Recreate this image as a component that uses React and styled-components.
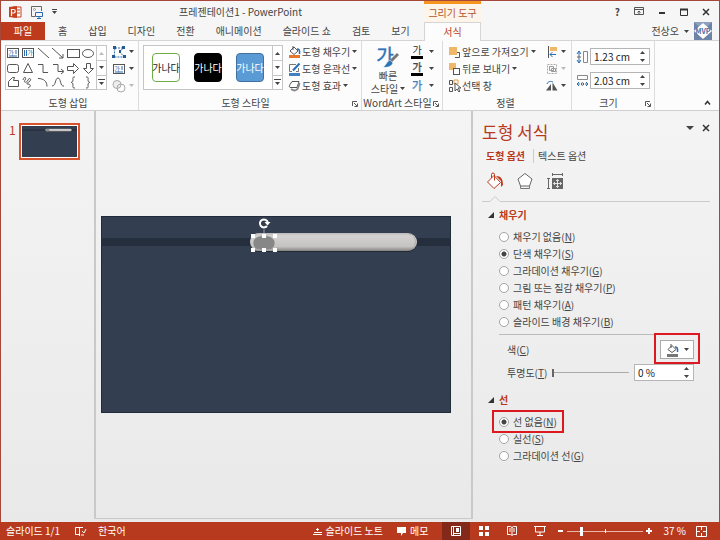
import { useState } from "react";
import styled, { createGlobalStyle } from "styled-components";

const GlobalStyle = createGlobalStyle`
  * {
    box-sizing: border-box;
  }

  body {
    margin: 0;
    font-family: "Noto Sans CJK KR", "Open Sans", sans-serif;
    font-size: 10px;
    line-height: 14px;
    color: #444;
  }

  button,
  input {
    font: inherit;
    color: inherit;
    margin: 0;
  }

  button {
    border: 0;
    padding: 0;
    background: none;
    white-space: nowrap;
  }

  svg {
    display: block;
    flex: none;
    overflow: visible;
  }
`;

const Icon = ({ w = 14, h = 14, children }) => (
  <svg width={w} height={h} viewBox={`0 0 ${w} ${h}`} fill="none" stroke="#555" aria-hidden="true">
    {children}
  </svg>
);

const Caret = ({ up, color = "#444" }) => (
  <svg width="5" height="3" viewBox="0 0 5 3" aria-hidden="true">
    <path d={up ? "M0 3h5L2.5 0z" : "M0 0h5L2.5 3z"} fill={color} />
  </svg>
);

const Hangul = ({ x, y, size, fill, children, stroke = "none" }) => (
  <text x={x} y={y} fontSize={size} fill={fill} stroke={stroke} strokeWidth="0.4" textAnchor="middle">
    {children}
  </text>
);

const shapes = [
  ["텍스트 상자", <><rect x="1.5" y="2.5" width="11" height="9" /><Hangul x="5" y="9" size="6" fill="#2b6cb0">가</Hangul><path d="M9 5h2M9 7h2M3 10h8" stroke="#2b6cb0" /></>],
  ["세로 텍스트 상자", <><rect x="1.5" y="2.5" width="11" height="9" /><Hangul x="9" y="9" size="6" fill="#2b6cb0">가</Hangul><path d="M3.500 4v6M5.500 4v6" stroke="#2b6cb0" /></>],
  ["선", <path d="M2 2l11 10" />],
  ["화살표", <path d="M1 2l11 10M12 8v4H8" />],
  ["직사각형", <rect x="1.5" y="3.5" width="12" height="8" />],
  ["타원", <ellipse cx="7" cy="7.5" rx="5.5" ry="4" />],
  ["둥근 직사각형", <rect x="1.5" y="3.500" width="11" height="8" rx="2" />],
  ["삼각형", <path d="M7 2.500L2.500 11.500h9z" />],
  ["꺾인 연결선", <path d="M2 3.500h5v8h5" />],
  ["꺾인 화살표", <path d="M2 3.500h5v7h5M10 8l3 2.500-3 2.500" />],
  ["오른쪽 화살표", <path d="M1.500 5.500h6V2.500l5 5-5 5V9.500h-6z" />],
  ["아래쪽 화살표", <path d="M5.500 2.500h4v5h3l-5 5-5-5h3z" />],
  ["자유형", <path d="M2.500 11.500V6.500l4-4h2l-1 3h5v6z" />],
  ["자유 곡선", <path d="M2 5c1-4 4-3 2 0s2 3 3 0 4-1 2 1-5 3-2 3 3 3 0 4" />],
  ["호", <path d="M2 3.500c6 0 9 3 9 8" />],
  ["곡선", <path d="M1 11c4 0 3-8 6-8s2 9 6 8" />],
  ["왼쪽 중괄호", <path d="M9 2c-3 0-2 1-2 3S6 7 5 7.500c1 0 2 .5 2 2.500s-1 3 2 3" />],
  ["오른쪽 중괄호", <path d="M5 2c3 0 2 1 2 3s1 2 2 2.500c-1 0-2 .5-2 2.500s1 3-2 3" />],
];

const tabs = ["홈", "삽입", "디자인", "전환", "애니메이션", "슬라이드 쇼", "검토", "보기"];

const wordStyles = [
  { name: "흰색 도형", bg: "#fff", line: "#70ad47", color: "#222" },
  { name: "검정 도형", bg: "#000", line: "#000", color: "#fff" },
  { name: "파랑 도형", bg: "#5b9bd5", line: "#41719c", color: "#fff" },
];

const fillOptions = [
  ["채우기 없음", "N"],
  ["단색 채우기", "S"],
  ["그라데이션 채우기", "G"],
  ["그림 또는 질감 채우기", "P"],
  ["패턴 채우기", "A"],
  ["슬라이드 배경 채우기", "B"],
];

const lineOptions = [
  ["선 없음", "N"],
  ["실선", "S"],
  ["그라데이션 선", "G"],
];

const GalleryScroll = ({ dimUp }) => (
  <ScrollColumn>
    <button type="button" aria-label="위로"><Caret up color={dimUp ? "#bbb" : "#444"} /></button>
    <button type="button" aria-label="아래로"><Caret /></button>
    <button type="button" aria-label="자세히">
      <svg width="7" height="6" viewBox="0 0 7 6"><path d="M0 0h7v1H0zM1 3h5L3.500 6z" fill="#444" /></svg>
    </button>
  </ScrollColumn>
);

const Launcher = () => (
  <LaunchButton type="button" aria-label="옵션 더 보기">
    <Icon w={6} h={6}><path d="M.5 5V.5H5M2 2l3 3M5.500 2.500v3h-3" /></Icon>
  </LaunchButton>
);

const Spinner = ({ label, value, onChange }) => (
  <SpinBox>
    <input aria-label={label} value={value} onChange={(e) => onChange(e.target.value)} />
    <div>
      <button type="button" aria-label={`${label} 늘리기`}><Caret up /></button>
      <button type="button" aria-label={`${label} 줄이기`}><Caret /></button>
    </div>
  </SpinBox>
);

const RadioList = ({ name, options, value, onChange, marked }) => (
  <Options>
    {options.map(([text, key]) => (
      <Option key={key} $marked={marked === key}>
        <input type="radio" name={name} checked={value === key} onChange={() => onChange(key)} />
        <span>{text}(<u>{key}</u>)</span>
      </Option>
    ))}
  </Options>
);

const SlideDrawing = ({ selected }) => (
  <SlideSvg viewBox="0 0 350 197">
    <defs>
      <linearGradient id="bar" x1="0" y1="0" x2="0" y2="1">
        <stop offset="0" stopColor="#b9b7b8" />
        <stop offset="0.150" stopColor="#d4d1d2" />
        <stop offset="0.75" stopColor="#c5c2c2" />
        <stop offset="1" stopColor="#858282" />
      </linearGradient>
    </defs>
    <rect width="350" height="197" fill="#333f50" />
    <rect x="0.5" y="0.5" width="349" height="196" fill="none" stroke="#222b3a" />
    <rect y="22" width="350" height="8" fill="#252e3c" />
    <rect x="149" y="18" width="167" height="18" rx="9" fill="#222a36" />
    <rect x="149" y="17" width="167" height="18" rx="9" fill="url(#bar)" />
    <path d="M308 18c8 1 9 14 0 16" fill="none" stroke="#9b9898" strokeWidth="1" opacity="0.6" />
    <ellipse cx="163" cy="27" rx="11" ry="7.500" fill="#878787" />
    {selected && (
      <g fill="#fff">
        <path d="M163 11v8M152 20h22v14h-22z" fill="none" stroke="#c9c9c9" strokeWidth="0.700" />
        {[152, 163, 174].map((x) => (
          <g key={x}>
            <rect x={x - 2} y="18" width="4" height="4" />
            <rect x={x - 2} y="32" width="4" height="4" />
          </g>
        ))}
        <path d="M166 10a4 4 0 1 1 .8-3.500" fill="none" stroke="#333f50" strokeWidth="4" />
        <path d="M166 10a4 4 0 1 1 .8-3.500" fill="none" stroke="#fff" strokeWidth="2" />
        <path d="M163.500 6h6l-3 3.500z" />
      </g>
    )}
  </SlideSvg>
);

const Ribbon = () => {
  const [height, setHeight] = useState("1.23 cm");
  const [width, setWidth] = useState("2.03 cm");

  return (
    <RibbonBar>
      <Group $basis="138px">
        <GroupBody $pad="4px">
          <Gallery>
            <ShapeGrid>
              {shapes.map(([name, art]) => (
                <button type="button" key={name} aria-label={name}><Icon>{art}</Icon></button>
              ))}
            </ShapeGrid>
            <GalleryScroll dimUp />
          </Gallery>
          <ToolStack>
            <Tool type="button" aria-label="도형 편집">
              <Icon><path d="M3 3h8L8 7l4 5H2z" stroke="#2b6cb0" strokeDasharray="2 1" /><path d="M1 1h3v3H1zM10 1h3v3h-3zM0 10h3v3H0zM11 10h3v3h-3zM7 5h2v3H7z" fill="#245a94" stroke="none" /></Icon>
              <Caret />
            </Tool>
            <Tool type="button" aria-label="텍스트 상자 그리기"><Icon>{shapes[0][1]}</Icon><Caret /></Tool>
            <Tool type="button" aria-label="도형 병합" disabled>
              <Icon><circle cx="5" cy="5.500" r="4" stroke="#aaa" fill="#eee" /><circle cx="9" cy="9" r="4" stroke="#aaa" /></Icon>
              <Caret color="#bbb" />
            </Tool>
          </ToolStack>
        </GroupBody>
        <GroupLabel><span>도형 삽입</span></GroupLabel>
      </Group>

      <Group $basis="223px">
        <GroupBody $pad="4px">
          <Gallery>
            <StyleRow>
              {wordStyles.map((s) => (
                <StyleChip type="button" key={s.name} aria-label={s.name} $bg={s.bg} $line={s.line} $color={s.color}>가나다</StyleChip>
              ))}
            </StyleRow>
            <GalleryScroll />
          </Gallery>
          <ToolStack>
            <Tool type="button" $gap="2px">
              <Icon w={12}><path d="M1 10h11v3H1z" fill="#e8762d" stroke="none" /><path d="M2 6l4-4 4 4-4 3.500zM5 1v4" /><path d="M9 4c2 0 3 1 2.500 5" stroke="#2b6cb0" strokeWidth="1.500" /></Icon>
              도형 채우기 <Caret />
            </Tool>
            <Tool type="button" $gap="2px">
              <Icon w={12}><path d="M1 11h11v3H1z" fill="#3f82c4" stroke="none" /><path d="M8 2.500H1.500v7H4M10.500 6v3.500H8" stroke="#777" /><path d="M11.500 1.500L5 8.500" stroke="#2b6cb0" strokeWidth="2" /></Icon>
              도형 윤곽선 <Caret />
            </Tool>
            <Tool type="button" $gap="2px">
              <Icon w={12}><path d="M4 2.500h7l-2 6H3c-2 0-2-1-1-3z" fill="#fff" /><path d="M3 10c3 2 6 2 7-1l1.500-5" strokeWidth="2" stroke="#888" /></Icon>
              도형 효과 <Caret />
            </Tool>
          </ToolStack>
        </GroupBody>
        <GroupLabel><span>도형 스타일</span><Launcher /></GroupLabel>
      </Group>

      <Group $basis="81px">
        <GroupBody $pad="8px">
          <QuickStyle type="button">
            <Icon w={24} h={24}>
              <Hangul x="9" y="18" size="19" fill="#2e75b6" stroke="#2e75b6">가</Hangul>
              <path d="M22 9l-8 8" stroke="#777" strokeWidth="3" />
              <path d="M14 15l3 3c-2 4-6 5-10 4 3-1 3-5 7-7z" fill="#2e75b6" stroke="#fff" strokeWidth="0.5" />
            </Icon>
            <span>빠른</span>
            <span>스타일 <Caret /></span>
          </QuickStyle>
          <ToolStack>
            <Tool type="button" $gap="6px" aria-label="텍스트 채우기"><Icon w={12}><Hangul x="6" y="9" size="10" fill="#333">가</Hangul><path d="M0 11h12v3H0z" fill="#000" stroke="none" /></Icon><Caret /></Tool>
            <Tool type="button" $gap="6px" aria-label="텍스트 윤곽선"><Icon w={12}><Hangul x="6" y="9" size="10" fill="#777" stroke="#333">가</Hangul><path d="M0 11h12v3H0z" fill="#000" stroke="none" /></Icon><Caret /></Tool>
            <Tool type="button" $gap="6px" aria-label="텍스트 효과"><Icon w={12}><Hangul x="6" y="11" size="11" fill="#7fb0e0" stroke="#2e75b6">가</Hangul></Icon><Caret /></Tool>
          </ToolStack>
        </GroupBody>
        <GroupLabel><span>WordArt 스타일</span><Launcher /></GroupLabel>
      </Group>

      <Group $basis="129px">
        <GroupBody $pad="5px" $spread>
          <ToolStack>
            <Tool type="button" $gap="2px"><Icon w={12}><path d="M7 7.500h4.500v5H7" /><path d="M1 2h8v8H1z" fill="#f0b768" stroke="none" /></Icon>앞으로 가져오기 <Caret /></Tool>
            <Tool type="button" $gap="2px"><Icon w={12}><path d="M1 1h7v7H1z" fill="#f0b768" stroke="none" /><rect x="5.500" y="6.500" width="6" height="6" fill="#fff" /></Icon>뒤로 보내기 <Caret /></Tool>
            <Tool type="button" $gap="2px"><Icon w={12}><path d="M1.500 1.500h3v4h-3zM1.500 8.500h3v4h-3z" /><path d="M6 1h4v4H6z" stroke="#e8a040" /><path d="M7 4v8l2-2 2 3 1-1-2-3h3z" fill="#fff" /></Icon>선택 창</Tool>
          </ToolStack>
          <ToolStack>
            <Tool type="button" aria-label="맞춤"><Icon w={12}><path d="M2.500 1v12" /><path d="M4 2h7v4H4z" fill="#f0b768" stroke="none" /><path d="M10 9.500H4M6.500 7L4 9.500 6.500 12" stroke="#2b6cb0" /></Icon><Caret /></Tool>
            <Tool type="button" aria-label="그룹" disabled><Icon w={12}><path d="M1.500 2.500h9v9h-9z" stroke="#aaa" strokeDasharray="2 1" /><path d="M3.500 4.500h4v4h-4zM5.500 6.500h4v3h-4z" stroke="#999" /></Icon><Caret color="#bbb" /></Tool>
            <Tool type="button" aria-label="회전"><Icon w={12}><path d="M6.500 11.500v-8l5 8zM0 11.500h5V5z" fill="#555" stroke="none" /><path d="M1 5c1-3 4-3 6-2" stroke="#2b6cb0" /></Icon><Caret /></Tool>
          </ToolStack>
        </GroupBody>
        <GroupLabel><span>정렬</span></GroupLabel>
      </Group>

      <Group $basis="83px">
        <SizeRows>
          <div>
            <Icon w={13}><path d="M3 1v4M3 9v4M1 4l2-3 2 3M1 10l2 3 2-3" stroke="#2b6cb0" /><circle cx="3" cy="7" r="1.200" /><path d="M7.500 1.500h4v11h-4z" stroke="#888" /></Icon>
            <Spinner label="도형 높이" value={height} onChange={setHeight} />
          </div>
          <div>
            <Icon w={13}><path d="M1.500 1.500h10v4h-10z" stroke="#888" /><path d="M1 10h3M9 10h3M3 8l-2 2 2 2M10 8l2 2-2 2" stroke="#2b6cb0" /><circle cx="6.500" cy="10" r="1.200" /></Icon>
            <Spinner label="도형 너비" value={width} onChange={setWidth} />
          </div>
        </SizeRows>
        <GroupLabel><span>크기</span><Launcher /></GroupLabel>
      </Group>

      <Collapse type="button" aria-label="리본 메뉴 축소">
        <Icon w={7} h={6}><path d="M1 4.500l2.500-3 2.500 3" stroke="#333" strokeWidth="1.500" /></Icon>
      </Collapse>
    </RibbonBar>
  );
};

const FormatPane = () => {
  const [fill, setFill] = useState("S");
  const [line, setLine] = useState("N");
  const [alpha, setAlpha] = useState("0 %");

  return (
    <Pane>
      <PaneHead>
        <h2>도형 서식</h2>
        <button type="button" aria-label="작업 창 옵션">
          <svg width="8" height="4" viewBox="0 0 8 4"><path d="M0 0h8L4 4z" fill="#444" /></svg>
        </button>
        <button type="button" aria-label="닫기">
          <Icon w={8} h={8}><path d="M1 1l6 6M7 1L1 7" stroke="#333" strokeWidth="1.500" /></Icon>
        </button>
      </PaneHead>
      <PaneTabs>
        <PaneTab type="button" $active>도형 옵션</PaneTab>
        <PaneTab type="button">텍스트 옵션</PaneTab>
      </PaneTabs>
      <PaneIcons>
        <button type="button" aria-label="채우기 및 선">
          <Icon w={18} h={18}>
            <path d="M8 3.500L1.500 10 8 16.500l6.500-6z" fill="#fff" stroke="#c0391b" />
            <path d="M5.500 6V2.500a1.500 1.500 0 0 1 3 0v6" stroke="#c0391b" />
            <path d="M10 4c5 0 7 3 7 9l-2 2V9z" fill="#c0391b" stroke="none" />
          </Icon>
        </button>
        <button type="button" aria-label="효과">
          <Icon w={18} h={18}><path d="M9 1.500l7 5.500-2.500 7h-9L2 7z" fill="#fff" stroke="#666" /><path d="M4.500 14v2.500h9V14" stroke="#777" /></Icon>
        </button>
        <button type="button" aria-label="크기 및 속성">
          <Icon w={18} h={18}><path d="M6 2.500h11M6.500 1v3M16.500 1v3M2.500 6v11M1 6.500h3M1 16.500h3" stroke="#666" /><path d="M6 6h11v11H6z" fill="#666" stroke="none" /><path d="M11.500 7.500v8M7.500 11.500h8M10 9l1.500-1.500L13 9M10 14l1.500 1.500L13 14M9 10l-1.500 1.500L9 13M14 10l1.500 1.500L14 13" stroke="#fff" strokeWidth="0.800" /></Icon>
        </button>
      </PaneIcons>
      <Notch>
        <svg width="28" height="7" viewBox="0 0 28 7"><path d="M0 6.500h8l5-5 5 5h10" fill="none" stroke="#ccc" /></svg>
        <i />
      </Notch>

      <SectionTitle>
        <Icon w={6} h={6}><path d="M6 0v6H0z" fill="#333" stroke="none" /></Icon>
        채우기
      </SectionTitle>
      <RadioList name="fill" options={fillOptions} value={fill} onChange={setFill} />
      <Rule />
      <Field>
        <label htmlFor="fill-color">색(<u>C</u>)</label>
        <Marked>
          <ColorButton id="fill-color" type="button">
            <Icon><path d="M2 11h11v3H2z" fill="#777" stroke="none" /><path d="M3 6.500l4-4 4 4-4 3zM6 1v4" /><path d="M10 4c2 0 3 1 2.500 5" stroke="#2b6cb0" strokeWidth="1.500" /></Icon>
            <Caret />
          </ColorButton>
        </Marked>
      </Field>
      <Field>
        <label htmlFor="alpha">투명도(<u>T</u>)</label>
        <Range id="alpha" type="range" min="0" max="100" defaultValue="0" />
        <Spinner label="투명도" value={alpha} onChange={setAlpha} />
      </Field>

      <SectionTitle $gap>
        <Icon w={6} h={6}><path d="M6 0v6H0z" fill="#333" stroke="none" /></Icon>
        선
      </SectionTitle>
      <RadioList name="line" options={lineOptions} value={line} onChange={setLine} marked="N" />
    </Pane>
  );
};

const StatusBar = () => (
  <Status>
    <StatusText>슬라이드 1/1</StatusText>
    <button type="button" aria-label="맞춤법 검사">
      <Icon w={12} h={12}><path d="M5.500 2.500h-4v7h4M5.500 2v9M5.500 2.500H9M7 10h3M8 6l2 2 2-4" stroke="#fff" /></Icon>
    </button>
    <button type="button">한국어</button>
    <Spacer />
    <NoteButton type="button"><Icon w={9} h={9}><path d="M1 5.500h8M0 7.500h9M3 2.500h3M4.500 1v3" stroke="#fff" /></Icon>슬라이드 노트</NoteButton>
    <NoteButton type="button"><Icon w={9} h={9}><path d="M0 0h9v6H6L4 9V6H0z" fill="#fff" stroke="none" /></Icon>메모</NoteButton>
    <Views>
      <ViewButton type="button" aria-label="기본" $on><Icon w={12} h={12}><path d="M1.500 1.500h9v9h-9zM3.500 1v10M4 8.500h7" stroke="#fff" /><path d="M6 3h3v4H6z" fill="#fff" stroke="none" /></Icon></ViewButton>
      <ViewButton type="button" aria-label="여러 슬라이드"><Icon w={12} h={12}><path d="M1 1h4v4H1zM7 1h4v4H7zM1 7h4v4H1zM7 7h4v4H7z" fill="#fff" stroke="none" /></Icon></ViewButton>
      <ViewButton type="button" aria-label="읽기용 보기"><Icon w={12} h={12}><path d="M1.500 1.500h3l1.500 1 1.500-1h3v8h-3L6 10.500l-1.500-1h-3zM6 2v8M3 4h2M3 6h2M7 4h2M7 6h2" stroke="#fff" /></Icon></ViewButton>
      <ViewButton type="button" aria-label="슬라이드 쇼"><Icon w={12} h={12}><path d="M0 1.500h12M1.500 2v5h9V2M6 7v3M3 10.500h6" stroke="#fff" /></Icon></ViewButton>
    </Views>
    <button type="button" aria-label="축소"><Icon w={6} h={6}><path d="M0 3h5" stroke="#fff" strokeWidth="2" /></Icon></button>
    <Zoom type="range" aria-label="확대/축소" min="0" max="100" defaultValue="17" />
    <button type="button" aria-label="확대"><Icon w={6} h={6}><path d="M0 3h6M3 0v6" stroke="#fff" strokeWidth="2" /></Icon></button>
    <Percent>37 %</Percent>
    <button type="button" aria-label="창에 맞춤"><Icon w={11} h={11}><path d="M.5.5h10v10H.5zM5.500 1v3M5.500 7v3M1 5.500h3M7 5.500h3" stroke="#fff" /></Icon></button>
  </Status>
);

const App = () => (
  <Window>
    <GlobalStyle />
    <Header>
      <TitleRow>
        <QuickAccess>
          <Icon w={14}>
            <path d="M5 2h8v10H5z" fill="#fff" stroke="#c8411f" />
            <path d="M8 5h4M8 8h4" stroke="#c8411f" />
            <path d="M1 2l8-1v12l-8-1z" fill="#c8411f" stroke="none" />
            <path d="M3.500 11V4.500h2a1.500 1.500 0 0 1 0 3.500h-2" stroke="#fff" strokeWidth="1.200" />
          </Icon>
          <button type="button" aria-label="처음부터 시작">
            <Icon w={14}><path d="M5 11.500H1.500v-10h10V6" stroke="#666" /><circle cx="4.500" cy="4.500" r="1" stroke="#999" /><path d="M5.500 7.500h7v4h-7zM9 12v2M7 13.500h4" stroke="#2b6cb0" /></Icon>
          </button>
          <button type="button" aria-label="빠른 실행 도구 모음 사용자 지정">
            <svg width="5" height="5" viewBox="0 0 5 5"><path d="M0 0h5v1H0zM0 2h5L2.500 5z" fill="#444" /></svg>
          </button>
        </QuickAccess>
        <Title>프레젠테이션1 - PowerPoint</Title>
      </TitleRow>
      <ContextTab>
        <span>그리기 도구</span>
        <button type="button">서식</button>
      </ContextTab>
      <WindowButtons>
        <button type="button" aria-label="도움말"><b>?</b></button>
        <button type="button" aria-label="리본 메뉴 표시 옵션"><Icon w={10} h={9}><path d="M.5.5h9v7h-9zM1 2.500h8M5 7V4M3.500 5.500L5 4l1.500 1.500" /></Icon></button>
        <button type="button" aria-label="최소화"><Icon w={8} h={8}><path d="M1 5h6" strokeWidth="2" stroke="#333" /></Icon></button>
        <button type="button" aria-label="최대화"><Icon w={8} h={8}><path d="M.5 1.500h7v6h-7z" stroke="#333" /><path d="M0 1.500h8" stroke="#333" strokeWidth="2" /></Icon></button>
        <button type="button" aria-label="닫기"><Icon w={8} h={8}><path d="M1 1l6 6M7 1L1 7" stroke="#333" strokeWidth="1.500" /></Icon></button>
      </WindowButtons>
      <TabRow>
        <FileTab type="button">파일</FileTab>
        {tabs.map((t) => (
          <Tab type="button" key={t}>{t}</Tab>
        ))}
      </TabRow>
      <Account>
        <button type="button">전상오 <Caret /></button>
        <Icon w={18} h={18}>
          <path d="M0 0h18v18H0z" fill="#6d83a8" stroke="none" />
          <path d="M0 0h18L9 9z" fill="#8ea0bd" stroke="none" />
          <path d="M9 1l9 8-9 8-9-8z" fill="#fff" stroke="none" />
          <text x="9" y="12" fontSize="7" fontWeight="700" textAnchor="middle" fill="#4a6ea5" stroke="none">MVP</text>
        </Icon>
      </Account>
    </Header>
    <Ribbon />
    <Workspace>
      <Thumbs>
        <span>1</span>
        <Thumb><SlideDrawing /></Thumb>
      </Thumbs>
      <Canvas><SlideDrawing selected /></Canvas>
      <FormatPane />
    </Workspace>
    <StatusBar />
  </Window>
);

const Window = styled.div`
  display: flex;
  flex-direction: column;
  min-height: 100vh;
  border: 1px solid #a5483a;
  border-bottom: 0;
  background: #f6f6f6;
`;

const Header = styled.header`
  display: grid;
  grid-template-columns: 423px 57px 1fr;
  grid-template-rows: 21px 18px;
  border-bottom: 1px solid #d5d5d5;
`;

const TitleRow = styled.div`
  display: flex;
  align-items: center;
`;

const QuickAccess = styled.div`
  display: flex;
  align-items: center;
  gap: 8px;
  width: 56px;
  padding-left: 7px;
`;

const Title = styled.div`
  flex: 1;
  text-align: center;
`;

const ContextTab = styled.div`
  grid-row: 1 / 3;
  grid-column: 2;
  display: flex;
  flex-direction: column;
  text-align: center;
  color: #b5562d;
  background: #fdf4ea;
  border-top: 3px solid #f7941e;
  margin-bottom: -1px;

  span {
    height: 18px;
    line-height: 18px;
    white-space: nowrap;
  }

  button {
    flex: 1;
    background: #fcfcfc;
    color: #b83a1b;
    border: 1px solid #d5d5d5;
    border-bottom: 0;
  }
`;

const WindowButtons = styled.div`
  display: flex;
  align-items: center;
  justify-content: flex-end;
  gap: 14px;
  padding-right: 9px;
`;

const TabRow = styled.nav`
  grid-row: 2;
  grid-column: 1;
  display: flex;
  gap: 1px;
`;

const Tab = styled.button`
  padding: 0 10px;
`;

const FileTab = styled.button`
  width: 44px;
  margin-right: 2px;
  color: #fff;
  background: #be3a1c;
`;

const Account = styled.div`
  display: flex;
  align-items: center;
  justify-content: flex-end;
  gap: 5px;
  padding-right: 7px;

  button {
    display: flex;
    align-items: center;
    gap: 5px;
  }
`;

const RibbonBar = styled.div`
  display: flex;
  height: 70px;
  background: #fcfcfc;
  border-bottom: 1px solid #cfcfcf;
`;

const Group = styled.section`
  display: flex;
  flex-direction: column;
  flex: 0 0 ${(props) => props.$basis};
  min-width: 0;
  padding-top: 2px;
  border-right: 1px solid #dcdcdc;
`;

const GroupBody = styled.div`
  display: flex;
  justify-content: ${(props) => (props.$spread ? "space-between" : "flex-start")};
  gap: 5px;
  height: 51px;
  padding: 0 ${(props) => props.$pad};
`;

const GroupLabel = styled.div`
  display: flex;
  align-items: center;
  height: 16px;
  padding: 2px 3px 0 0;
  white-space: nowrap;

  span {
    flex: 1;
    text-align: center;
  }
`;

const LaunchButton = styled.button`
  margin-top: 2px;
`;

const Gallery = styled.div`
  display: flex;
  height: 45px;
  margin-top: 2px;
  border: 1px solid #c6c6c6;
  background: #fff;
`;

const ShapeGrid = styled.div`
  display: grid;
  grid-template-columns: repeat(6, 15px);
  align-content: space-evenly;
`;

const StyleRow = styled.div`
  display: flex;
  align-items: center;
  gap: 14px;
  padding: 0 8px;
`;

const StyleChip = styled.button`
  display: flex;
  justify-content: center;
  align-items: center;
  width: 28px;
  height: 29px;
  border: 1px solid ${(props) => props.$line};
  border-radius: 4px;
  background: ${(props) => props.$bg};
  color: ${(props) => props.$color};
`;

const ScrollColumn = styled.div`
  display: grid;
  grid-template-rows: repeat(3, 1fr);
  width: 10px;
  border-left: 1px solid #c6c6c6;

  button {
    display: flex;
    align-items: center;
    justify-content: center;
  }

  button + button {
    border-top: 1px solid #c6c6c6;
  }
`;

const ToolStack = styled.div`
  display: grid;
  grid-template-rows: repeat(3, 17px);
`;

const Tool = styled.button`
  display: flex;
  align-items: center;
  gap: ${(props) => props.$gap || "3px"};
`;

const QuickStyle = styled.button`
  display: flex;
  flex-direction: column;
  align-items: center;
  width: 36px;
  padding-top: 2px;

  span {
    display: flex;
    align-items: center;
    gap: 2px;
    line-height: 13px;
  }
`;

const SizeRows = styled.div`
  display: flex;
  flex-direction: column;
  gap: 7px;
  height: 51px;
  padding: 5px 2px 0 4px;

  > div {
    display: flex;
    align-items: center;
    gap: 1px;
  }
`;

const SpinBox = styled.div`
  display: flex;
  width: 60px;
  height: 17px;
  border: 1px solid #b5b5b5;
  background: #fff;
  color: #222;

  input {
    flex: 1;
    min-width: 0;
    padding: 0 0 0 3px;
    border: 0;
    outline: none;
    background: none;
  }

  > div {
    display: grid;
    width: 13px;
  }

  button {
    display: flex;
    align-items: center;
    justify-content: center;
  }
`;

const Collapse = styled.button`
  align-self: flex-end;
  margin: 0 8px 4px auto;
`;

const Workspace = styled.main`
  display: grid;
  grid-template-columns: 93px 1fr 246px;
  flex: 1;
  background: linear-gradient(#f4f4f4, #e9e9e9);
`;

const Thumbs = styled.aside`
  display: flex;
  align-items: flex-start;
  gap: 3px;
  padding: 12px 0 0 8px;
  color: #c0391b;
  font-size: 12px;
`;

const Thumb = styled.div`
  width: 61px;
  border: 2px solid #d9532c;
  padding: 1px;
  background: #fff;
`;

const Canvas = styled.section`
  display: flex;
  align-items: center;
  margin-bottom: 3px;
  padding: 0 20px 0 5px;
  border: solid #c9c9c9;
  border-width: 0 2px 1px 2px;
`;

const SlideSvg = styled.svg`
  flex: auto;
  width: 100%;
  height: auto;
`;

const Pane = styled.aside`
  padding: 9px 9px 0 9px;
`;

const PaneHead = styled.div`
  display: flex;
  align-items: flex-start;
  gap: 8px;

  h2 {
    flex: 1;
    margin: 0;
    font-size: 17px;
    font-weight: 400;
    line-height: 24px;
    color: #b7391d;
  }

  button {
    display: flex;
    align-items: center;
    height: 16px;
  }
`;

const PaneTabs = styled.div`
  display: flex;
  padding: 5px 0 0 4px;
`;

const PaneTab = styled.button`
  padding-right: 8px;
  color: ${(props) => (props.$active ? "#b7391d" : "#444")};
  font-weight: ${(props) => (props.$active ? 700 : 400)};

  & + & {
    padding: 0 0 0 4px;
    border-left: 1px solid #ccc;
  }
`;

const PaneIcons = styled.div`
  display: flex;
  gap: 12px;
  padding: 9px 0 5px 4px;
`;

const Notch = styled.div`
  display: flex;
  align-items: flex-end;

  i {
    flex: 1;
    border-top: 1px solid #ccc;
  }
`;

const SectionTitle = styled.h3`
  display: flex;
  align-items: center;
  gap: 5px;
  margin: ${(props) => (props.$gap ? "12px" : "6px")} 0 6px 6px;
  font-size: 10px;
  font-weight: 700;
  color: #b7391d;
`;

const Options = styled.div`
  display: flex;
  flex-direction: column;
  align-items: flex-start;
  padding-left: 17px;
`;

const Option = styled.label`
  position: relative;
  display: flex;
  align-items: center;
  gap: 4px;
  height: 17px;

  input {
    appearance: none;
    width: 10px;
    height: 10px;
    border: 1px solid #a5a5a5;
    border-radius: 50%;
    background: #fff;
  }

  input:checked {
    background: radial-gradient(circle, #444 2px, #fff 3px);
  }

  &::after {
    content: ${(props) => (props.$marked ? '""' : "none")};
    position: absolute;
    inset: -3px -7px;
    border: 2px solid #dc1820;
  }
`;

const Rule = styled.div`
  margin: 4px 13px 5px 17px;
  border-top: 1px solid #bbb;
`;

const Field = styled.div`
  display: flex;
  align-items: center;
  justify-content: space-between;
  gap: 5px;
  padding: 0 16px 0 25px;
  margin-bottom: 5px;
`;

const Marked = styled.div`
  position: relative;

  &::after {
    content: "";
    position: absolute;
    inset: -7px -6px -5px -6px;
    border: 2px solid #dc1820;
    pointer-events: none;
  }
`;

const ColorButton = styled.button`
  display: flex;
  align-items: center;
  justify-content: center;
  gap: 5px;
  width: 34px;
  height: 19px;
  border: 1px solid #ababab;
  background: #fff;
`;

const Range = styled.input`
  appearance: none;
  flex: 1;
  min-width: 0;
  height: 9px;
  background: linear-gradient(#aaa, #aaa) center / 100% 1px no-repeat;

  &::-webkit-slider-thumb {
    appearance: none;
    width: 2px;
    height: 8px;
    background: #666;
  }
`;

const Status = styled.footer`
  display: flex;
  align-items: center;
  height: 18px;
  margin: 0 -1px;
  padding: 0 13px 0 6px;
  color: #fff;
  background: #b83a1e;
`;

const StatusText = styled.span`
  margin-right: 14px;

  & + button {
    margin-right: 12px;
  }
`;

const Spacer = styled.div`
  flex: 1;
`;

const NoteButton = styled.button`
  display: flex;
  align-items: center;
  gap: 4px;
  margin-right: 14px;
`;

const Views = styled.div`
  display: flex;
  align-self: stretch;
  margin-right: 4px;
`;

const ViewButton = styled.button`
  display: flex;
  align-items: center;
  justify-content: center;
  width: 28px;
  background: ${(props) => (props.$on ? "#84281a" : "none")};
`;

const Zoom = styled.input`
  appearance: none;
  width: 76px;
  height: 10px;
  margin: 0 3px;
  background:
    linear-gradient(#fff, #fff) center / 1px 4px no-repeat,
    linear-gradient(#e9b8ab, #e9b8ab) center / 100% 1px no-repeat;

  &::-webkit-slider-thumb {
    appearance: none;
    width: 3px;
    height: 9px;
    background: #fff;
  }
`;

const Percent = styled.span`
  margin: 0 10px 0 11px;
`;

export default App;
